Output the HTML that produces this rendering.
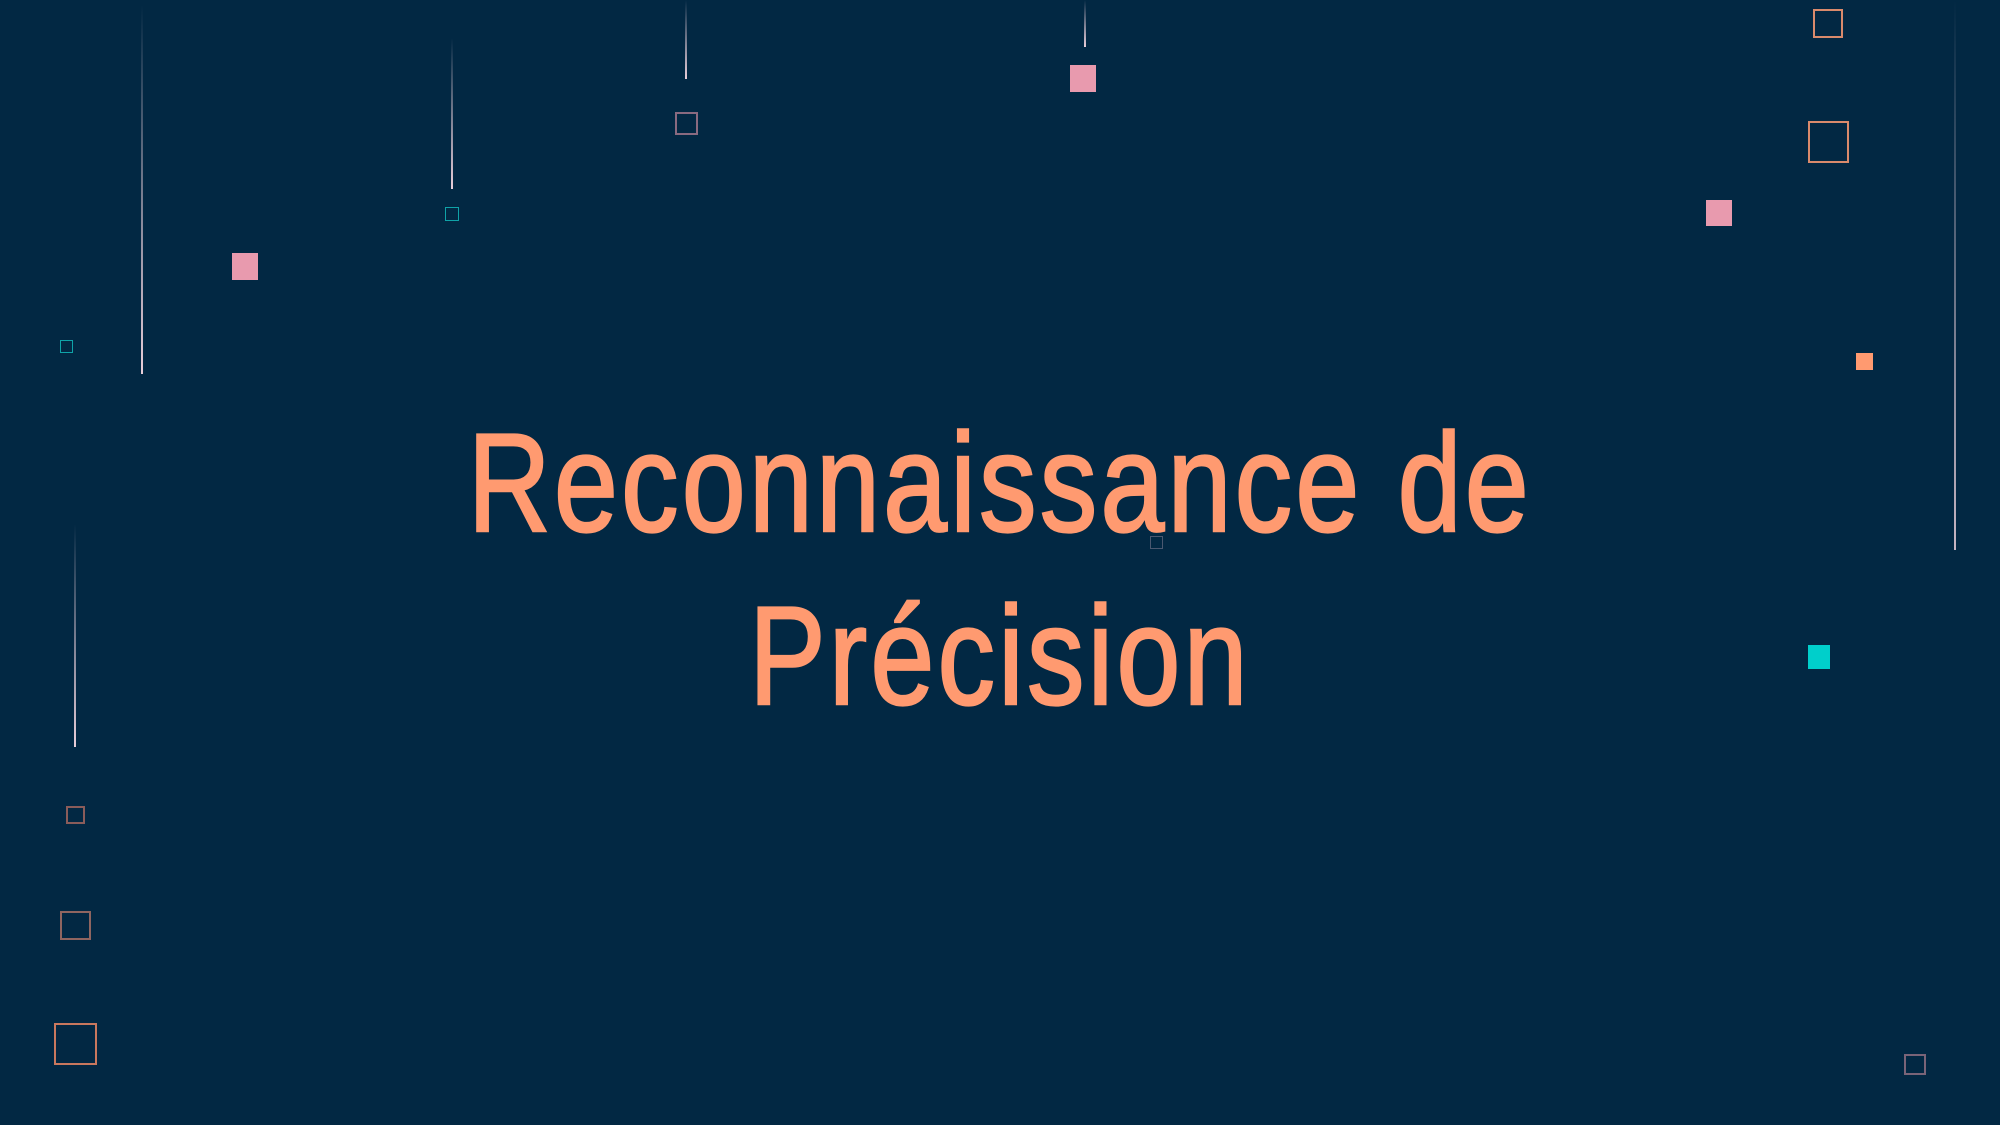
<!DOCTYPE html>
<html><head><meta charset="utf-8"><style>
html,body{margin:0;padding:0}
body{width:2000px;height:1125px;background:#022843;position:relative;overflow:hidden}
.l{position:absolute;width:2px;background:linear-gradient(to bottom,rgba(240,200,215,0),rgba(245,215,225,0.95))}
.b{position:absolute;box-sizing:border-box;border:2px solid}
.f{position:absolute}
.t{position:absolute;left:0;width:2000px;text-align:center;color:#FF9A70;font-family:"Liberation Sans",sans-serif;font-size:140px;line-height:140px;white-space:nowrap;-webkit-text-stroke:2.5px #FF9A70;letter-spacing:4px}
.t span{display:inline-block;transform:scaleX(0.82);transform-origin:center}
</style></head><body>
<div class="l" style="left:141px;top:5px;height:369px"></div>
<div class="l" style="left:451px;top:38px;height:151px"></div>
<div class="l" style="left:685px;top:0;height:79px"></div>
<div class="l" style="left:1084px;top:0;height:47px"></div>
<div class="l" style="left:74px;top:524px;height:223px"></div>
<div class="l" style="left:1954px;top:0;height:550px;opacity:.85"></div>

<div class="f" style="left:232px;top:253px;width:26px;height:27px;background:#E89AAE"></div>
<div class="f" style="left:1070px;top:65px;width:26px;height:27px;background:#E89AAE"></div>
<div class="f" style="left:1706px;top:200px;width:26px;height:26px;background:#E89AAE"></div>
<div class="f" style="left:1856px;top:353px;width:17px;height:17px;background:#FF9A70"></div>
<div class="f" style="left:1808px;top:645px;width:22px;height:24px;background:#00CFCB"></div>

<div class="b" style="left:445px;top:207px;width:14px;height:14px;border-color:#0fa3a8;border-width:1.5px"></div>
<div class="b" style="left:60px;top:340px;width:13px;height:13px;border-color:#0fa3a8;border-width:1.5px"></div>
<div class="b" style="left:675px;top:112px;width:23px;height:23px;border-color:#8a6a80"></div>
<div class="b" style="left:1813px;top:9px;width:30px;height:29px;border-color:#d98a6c"></div>
<div class="b" style="left:1808px;top:121px;width:41px;height:42px;border-color:#d98a6c"></div>
<div class="b" style="left:1150px;top:536px;width:13px;height:13px;border-color:#4a5870;border-width:1px"></div>
<div class="b" style="left:1904px;top:1054px;width:22px;height:21px;border-color:#7a6478"></div>
<div class="b" style="left:66px;top:806px;width:19px;height:18px;border-color:#8a5c5a"></div>
<div class="b" style="left:60px;top:911px;width:31px;height:29px;border-color:#8f6560"></div>
<div class="b" style="left:54px;top:1023px;width:43px;height:42px;border-color:#c9785e"></div>

<div class="t" style="top:413px"><span>Reconnaissance de</span></div>
<div class="t" style="top:586px"><span>Précision</span></div>
</body></html>
